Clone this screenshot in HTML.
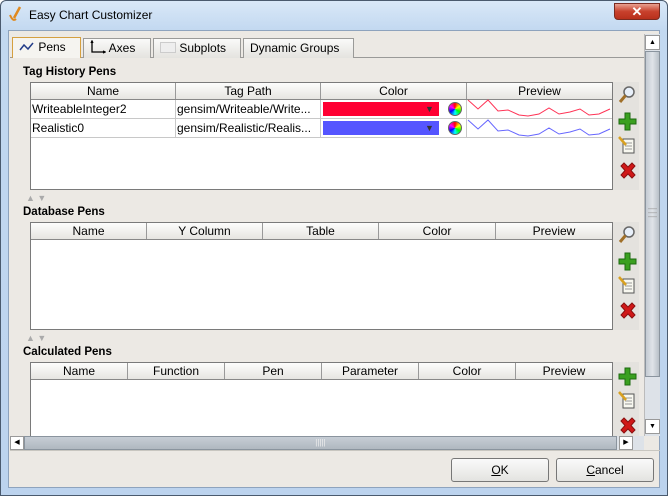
<!DOCTYPE html><html><head><style>
*{box-sizing:border-box;margin:0;padding:0}
body{width:668px;height:496px;overflow:hidden;font-family:"Liberation Sans",sans-serif;font-size:12px;color:#000;background:#fff;position:relative}
.a{position:absolute}
.win{left:0;top:0;width:668px;height:496px;border:1px solid #4a5a6e;border-radius:6px 6px 0 0;background:linear-gradient(#d9e8f8,#c2d8f0 30px,#bcd3ee);}
.client{left:8px;top:30px;width:652px;height:458px;background:#ece9e4;border:1px solid #8ea3bd}
.tab{top:38px;height:20px;border:1px solid #9a9a98;border-bottom:none;background:linear-gradient(#fafaf9,#e4e3df);font-size:12px;line-height:18px;padding-left:6px}
.lbl{font-weight:bold;font-size:11.5px}
.tbl{background:#fff;border:1px solid #7a7a7a}
.hd{display:flex;height:17px;background:linear-gradient(#fdfdfc,#e6e5e1);border-bottom:1px solid #888}
.hd div{border-right:1px solid #999;text-align:center;line-height:16px;font-size:12px}
.row{display:flex;height:19px;border-bottom:1px solid #c8c8c8}
.row div{border-right:1px solid #c8c8c8;line-height:18px;padding-left:1px;white-space:nowrap;overflow:hidden}
.btn{top:458px;height:24px;width:98px;border:1px solid #777;border-radius:3px;background:linear-gradient(#fafafa,#e3e3e0);text-align:center;line-height:22px}
.tri{font-size:9px;color:#aaa}
</style></head><body>
<div class="a win"></div>
<svg class="a" style="left:8px;top:6px" width="16" height="18"><path d="M12 1 L6 12" stroke="#e08a20" stroke-width="2.5"/><path d="M2 9 Q5 16 8 13" stroke="#e08a20" stroke-width="2" fill="none"/></svg>
<div class="a" style="left:29px;top:8px;font-size:12px">Easy Chart Customizer</div>
<div class="a" style="left:614px;top:3px;width:46px;height:17px;border:1px solid #7a2a20;border-radius:0 0 4px 4px;background:linear-gradient(#e8a090,#c8402c 50%,#b8301c);color:#fff;text-align:center;font-weight:bold;line-height:16px;font-size:13px">✕</div>
<div class="a client"></div>
<div class="a" style="left:10px;top:57px;width:634px;height:1px;background:#9a9a98"></div>
<div class="a tab" style="left:12px;width:69px;border-color:#d5a040;background:#f5f4f0;top:37px;height:21px"><svg width="16" height="10" style="vertical-align:-1px"><path d="M1 8 L5 3 L9 7 L14 1" stroke="#223c88" stroke-width="1.5" fill="none"/></svg> Pens</div>
<div class="a tab" style="left:83px;width:68px"><svg width="16" height="14" style="vertical-align:-2px"><path d="M2 1 V12 H15 M1 3 L2 1 L3 3 M13 11 L15 12 L13 13" stroke="#000" stroke-width="1.3" fill="none"/></svg> Axes</div>
<div class="a tab" style="left:153px;width:88px"><span style="display:inline-block;width:16px;height:11px;border:1px solid #ccc;background:#eee;vertical-align:-1px"></span> Subplots</div>
<div class="a tab" style="left:243px;width:111px">Dynamic Groups</div>
<div class="a lbl" style="left:23px;top:66px">Tag History Pens</div>
<div class="a tbl" style="left:30px;top:82px;width:583px;height:108px">
<div class="hd"><div style="width:145px">Name</div><div style="width:145px">Tag Path</div><div style="width:146px">Color</div><div style="flex:1;border:none">Preview</div></div>
<div class="row"><div style="width:145px">WriteableInteger2</div><div style="width:145px">gensim/Writeable/Write...</div><div style="width:146px;position:relative"><span class="a" style="left:2px;top:2px;width:116px;height:14px;background:#ff0033"></span><span class="a" style="left:104px;top:0;color:#333;font-size:9px">▼</span><span class="a" style="left:127px;top:2px;width:14px;height:14px;border-radius:7px;background:conic-gradient(red,yellow,lime,cyan,blue,magenta,red);border:1px solid #666"></span></div><div style="flex:1;border:none"></div></div>
<div class="row"><div style="width:145px">Realistic0</div><div style="width:145px">gensim/Realistic/Realis...</div><div style="width:146px;position:relative"><span class="a" style="left:2px;top:2px;width:116px;height:14px;background:#5555ff"></span><span class="a" style="left:104px;top:0;color:#333;font-size:9px">▼</span><span class="a" style="left:127px;top:2px;width:14px;height:14px;border-radius:7px;background:conic-gradient(red,yellow,lime,cyan,blue,magenta,red);border:1px solid #666"></span></div><div style="flex:1;border:none"></div></div>
</div>
<svg class="a" style="left:467px;top:99px" width="145" height="40"><polyline points="1,1 11,10 21,1 31,12 41,11 52,16 61,17 72,15 82,9 92,15 103,13 113,10 122,16 132,15 143,10" stroke="#ff3355" fill="none"/><polyline points="1,21 11,30 21,21 31,32 41,31 52,36 61,37 72,35 82,29 92,35 103,33 113,30 122,36 132,35 143,30" stroke="#6666ff" fill="none"/></svg>
<div class="a" style="left:613px;top:82px;width:26px;height:108px;background:#e4e2de"></div>
<div class="a" style="left:613px;top:222px;width:26px;height:108px;background:#e4e2de"></div>
<div class="a" style="left:613px;top:362px;width:26px;height:74px;background:#e4e2de"></div>
<div class="a tri" style="left:26px;top:193px">▲ ▼</div>
<div class="a lbl" style="left:23px;top:206px">Database Pens</div>
<div class="a tbl" style="left:30px;top:222px;width:583px;height:108px">
<div class="hd"><div style="width:116px">Name</div><div style="width:116px">Y Column</div><div style="width:116px">Table</div><div style="width:117px">Color</div><div style="flex:1;border:none">Preview</div></div></div>
<div class="a tri" style="left:26px;top:333px">▲ ▼</div>
<div class="a lbl" style="left:23px;top:346px">Calculated Pens</div>
<div class="a tbl" style="left:30px;top:362px;width:583px;height:80px">
<div class="hd"><div style="width:97px">Name</div><div style="width:97px">Function</div><div style="width:97px">Pen</div><div style="width:97px">Parameter</div><div style="width:97px">Color</div><div style="flex:1;border:none">Preview</div></div></div>
<svg width="0" height="0" style="position:absolute"><defs>
<g id="mag"><circle cx="11" cy="6" r="5" fill="#e8f0fa" stroke="#666" stroke-width="1.5"/><path d="M7.5 9.5 L2 16" stroke="#a0702a" stroke-width="3"/></g>
<g id="plus"><path d="M7 1h5v6h6v5h-6v6h-5v-6h-6v-5h6z" fill="#3aa020" stroke="#1d6a10"/></g>
<g id="note"><path d="M5 3h11v14h-11z" fill="#f8f8f0" stroke="#555"/><path d="M7 7h7M7 10h7M7 13h7" stroke="#999"/><path d="M1 1 L8 9" stroke="#d8a020" stroke-width="2.5"/></g>
<g id="x"><path d="M2 4 L5 1 L9 5 L13 1 L16 4 L12 8.5 L16 13 L13 16 L9 12 L5 16 L2 13 L6 8.5z" fill="#d01818" stroke="#8a1010"/></g>
</defs></svg>
<svg class="a" style="left:618px;top:86px" width="20" height="18"><use href="#mag"/></svg>
<svg class="a" style="left:618px;top:112px" width="20" height="20"><use href="#plus"/></svg>
<svg class="a" style="left:618px;top:136px" width="20" height="20"><use href="#note"/></svg>
<svg class="a" style="left:619px;top:162px" width="20" height="20"><use href="#x"/></svg>
<svg class="a" style="left:618px;top:226px" width="20" height="18"><use href="#mag"/></svg>
<svg class="a" style="left:618px;top:252px" width="20" height="20"><use href="#plus"/></svg>
<svg class="a" style="left:618px;top:276px" width="20" height="20"><use href="#note"/></svg>
<svg class="a" style="left:619px;top:302px" width="20" height="20"><use href="#x"/></svg>
<svg class="a" style="left:618px;top:367px" width="20" height="20"><use href="#plus"/></svg>
<svg class="a" style="left:618px;top:391px" width="20" height="20"><use href="#note"/></svg>
<svg class="a" style="left:619px;top:417px" width="20" height="20"><use href="#x"/></svg>
<div class="a" style="left:644px;top:34px;width:16px;height:402px;background:#dde2e8;border-left:1px solid #bbb"></div>
<div class="a" style="left:645px;top:35px;width:15px;height:15px;background:#fff;border:1px solid #999;font-size:7px;text-align:center;line-height:13px">▲</div>
<div class="a" style="left:645px;top:51px;width:15px;height:326px;background:linear-gradient(90deg,#c4cbd3,#dfe3e8,#b8c0c8);border:1px solid #8a949e;color:#999;font-size:9px;text-align:center;line-height:4px;padding-top:154px">—<br>—<br>—</div>
<div class="a" style="left:645px;top:419px;width:15px;height:15px;background:#fff;border:1px solid #999;font-size:7px;text-align:center;line-height:13px">▼</div>
<div class="a" style="left:10px;top:436px;width:634px;height:14px;background:#dde2e8"></div>
<div class="a" style="left:10px;top:436px;width:14px;height:14px;background:#fff;border:1px solid #999;font-size:7px;text-align:center;line-height:12px">◀</div>
<div class="a" style="left:24px;top:436px;width:593px;height:14px;background:linear-gradient(#c6cdd5,#b0b8c0);border:1px solid #8a949e;text-align:center;color:#eee;font-size:8px;line-height:12px">|||||</div>
<div class="a" style="left:619px;top:436px;width:14px;height:14px;background:#fff;border:1px solid #999;font-size:7px;text-align:center;line-height:12px">▶</div>
<div class="a" style="left:10px;top:450px;width:650px;height:1px;background:#c8c6c0"></div>
<div class="a btn" style="left:451px"><u>O</u>K</div>
<div class="a btn" style="left:556px"><u>C</u>ancel</div>
</body></html>
